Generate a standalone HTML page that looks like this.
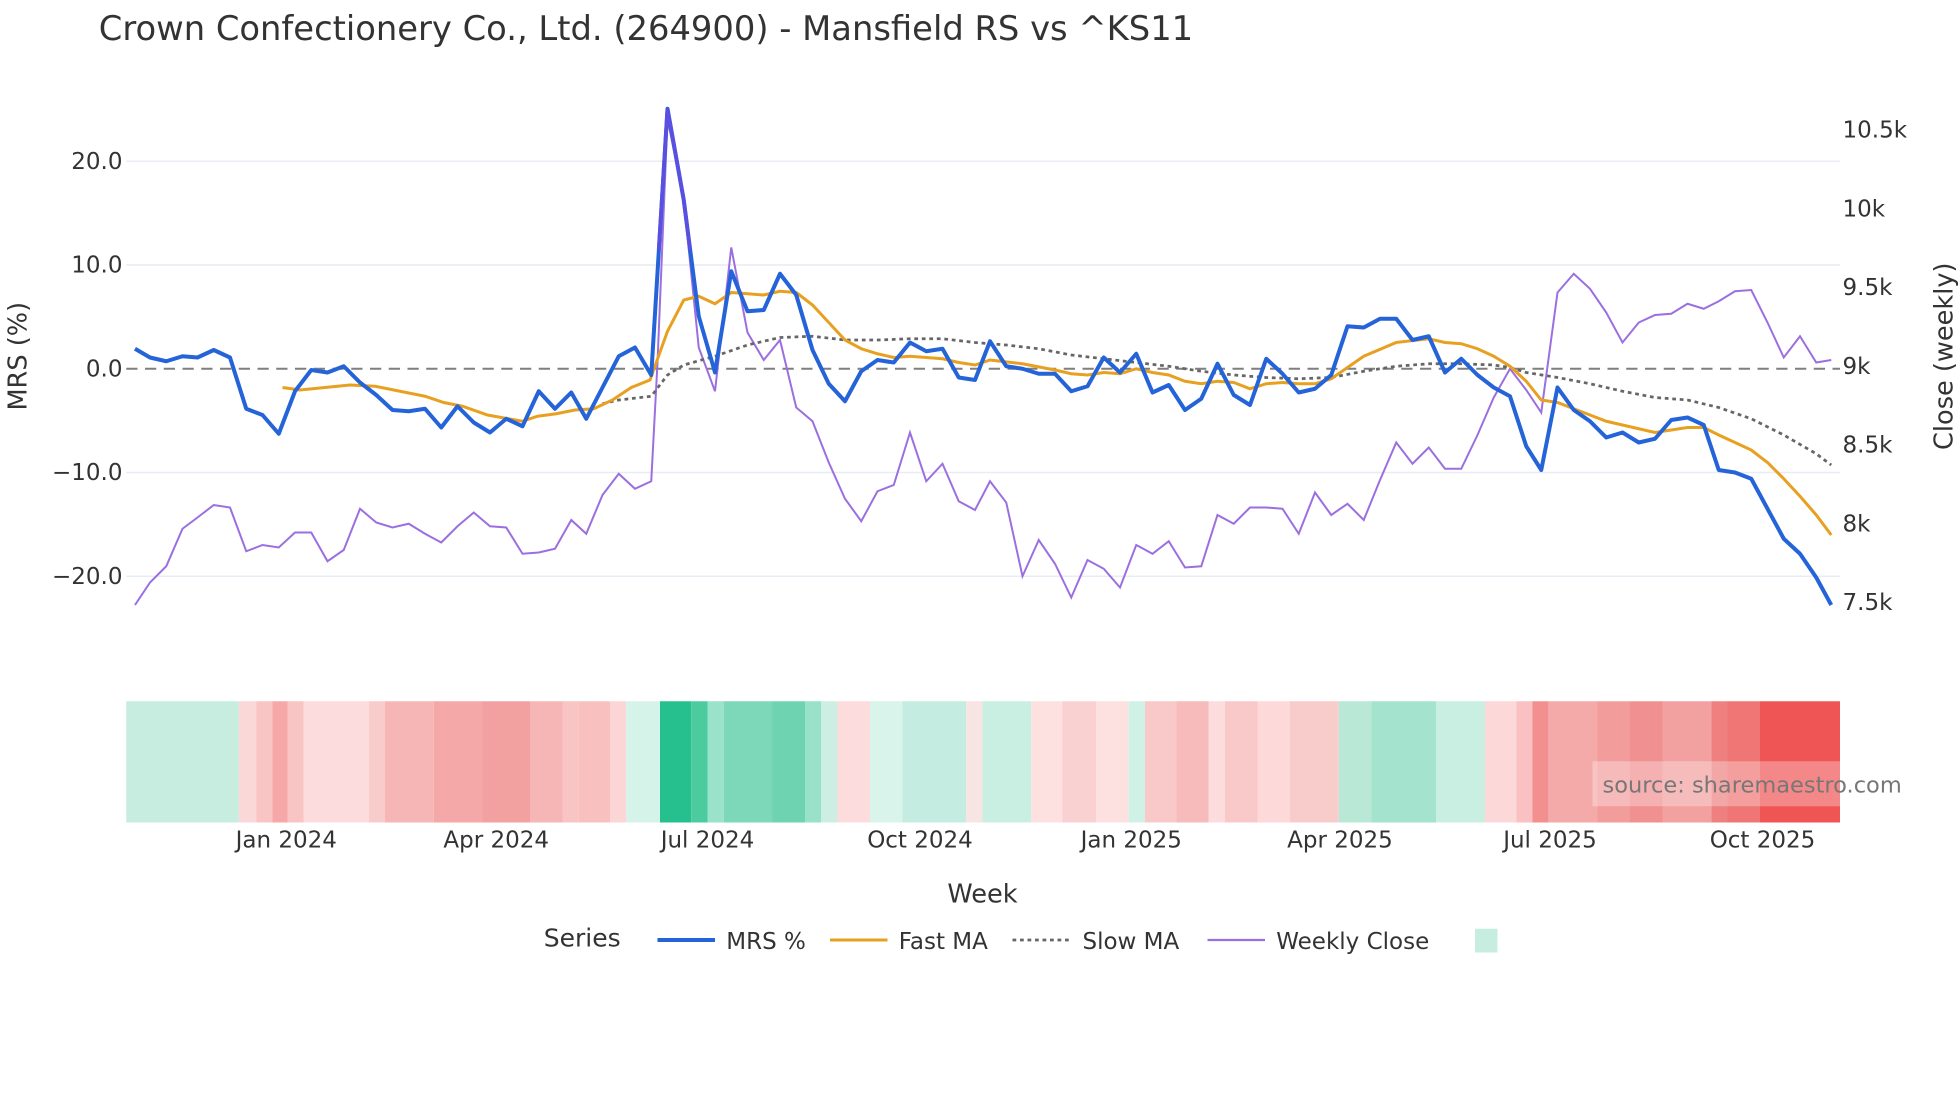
<!DOCTYPE html>
<html><head><meta charset="utf-8"><style>html,body{margin:0;padding:0;background:#fff}svg{display:block}</style></head>
<body>
<svg width="1960" height="1102" viewBox="0 0 1568 881.6" xmlns="http://www.w3.org/2000/svg" font-family="DejaVu Sans, Liberation Sans, sans-serif" fill="#2a3f5f">
<text x="79" y="32" font-size="27" fill="#333">Crown Confectionery Co., Ltd. (264900) - Mansfield RS vs ^KS11</text>
<g stroke="#e8ecf4" stroke-width="1.2">
<line x1="101" x2="1472" y1="129" y2="129"/><line x1="101" x2="1472" y1="212" y2="212"/><line x1="101" x2="1472" y1="378" y2="378"/><line x1="101" x2="1472" y1="461" y2="461"/>
</g>
<line x1="101" x2="1472" y1="295" y2="295" stroke="#7f7f7f" stroke-width="1.6" stroke-dasharray="9,6"/>
<g font-size="18.4" fill="#333" text-anchor="end">
<text x="98" y="135">20.0</text><text x="98" y="218">10.0</text><text x="98" y="301">0.0</text><text x="98" y="384">−10.0</text><text x="98" y="467">−20.0</text>
</g>
<g font-size="18.4" fill="#333">
<text x="1474" y="110">10.5k</text><text x="1474" y="173">10k</text><text x="1474" y="236">9.5k</text><text x="1474" y="299">9k</text><text x="1474" y="362">8.5k</text><text x="1474" y="425">8k</text><text x="1474" y="488">7.5k</text>
</g>
<text transform="translate(21,285) rotate(-90)" font-size="20.5" fill="#333" text-anchor="middle">MRS (%)</text>
<text transform="translate(1562,285) rotate(-90)" font-size="20.5" fill="#333" text-anchor="middle">Close (weekly)</text>

<polyline fill="none" stroke="#9b6fe0" stroke-width="1.6" points="108,484 120,466 133,453 146,423 158,414 171,404 184,406 197,441 210,436 223,438 236,426 249,426 262,449 275,440 288,407 301,418 314,422 327,419 340,427 353,434 366,421 379,410 392,421 405,422 418,443 431,442 444,439 457,416 469,427 482,396 495,379 508,391 521,385 526,290 534,95 547,160 559,278 572,313 585,198 598,266 611,288 624,272 637,326 650,337 663,370 676,399 689,417 702,393 715,388 728,346 741,385 754,371 767,401 780,408 792,385 805,402 818,461 831,432 844,451 857,478 870,448 883,455 896,470 909,436 922,443 935,433 948,454 961,453 974,412 987,419 1000,406 1013,406 1026,407 1039,427 1052,394 1065,412 1078,403 1091,416 1104,384 1117,354 1130,371 1143,358 1156,375 1169,375 1182,348 1195,318 1208,295 1221,312 1233,330 1246,234 1259,219 1272,231 1285,250 1298,274 1311,258 1324,252 1337,251 1350,243 1363,247 1375,241 1388,233 1401,232 1414,258 1427,286 1440,269 1453,290 1465,288"/>
<polyline fill="none" stroke="#666" stroke-width="2.2" stroke-dasharray="3,3" points="482,323 495,320 521,317 534,300 547,292 572,285 598,276 624,270 650,269 676,272 702,272 728,271 754,271 780,274 805,276 831,279 857,284 883,287 909,290 935,293 961,297 987,300 1013,302 1039,303 1065,302 1091,297 1117,293 1143,291 1169,291 1195,292 1208,294 1221,298 1246,302 1272,307 1298,313 1324,318 1350,320 1375,326 1401,335 1427,348 1453,363 1465,372"/>
<polyline fill="none" stroke="#e8a020" stroke-width="2.4" points="226,310 240,312 260,310 280,308 300,309 320,313 340,317 355,322 370,325 390,332 418,337 430,333 445,331 460,328 475,327 490,320 505,310 520,304 534,265 547,240 559,237 572,243 585,234 598,235 611,236 624,233 637,234 650,244 663,258 676,272 689,279 702,283 715,286 728,285 754,287 767,290 780,292 792,288 818,291 844,296 857,299 870,300 883,298 896,299 909,295 922,298 935,300 948,305 961,307 974,305 987,306 1000,311 1013,307 1026,306 1039,307 1052,307 1065,303 1078,294 1091,285 1117,274 1143,271 1156,274 1169,275 1182,279 1195,285 1208,293 1221,305 1233,320 1246,322 1259,327 1272,332 1285,337 1298,340 1311,343 1324,346 1337,344 1350,342 1363,342 1375,348 1388,354 1401,360 1414,370 1427,383 1440,397 1453,412 1465,428"/>
<polyline fill="none" stroke="#2563d8" stroke-width="3.2" stroke-linejoin="round" points="108,279 120,286 133,289 146,285 158,286 171,280 184,286 197,327 210,332 223,347 236,313 249,296 262,298 275,293 288,306 301,316 314,328 327,329 340,327 353,342 366,325 379,338 392,346 405,335 418,341 431,313 444,327 457,314 469,335 482,310 495,285 508,278 521,300 534,87 547,160 559,253 572,298 585,217 598,249 611,248 624,219 637,236 650,280 663,307 676,321 689,297 702,288 715,290 728,274 741,281 754,279 767,302 780,304 792,273 805,293 818,295 831,299 844,299 857,313 870,309 883,286 896,298 909,283 922,314 935,308 948,328 961,319 974,291 987,316 1000,324 1013,287 1026,299 1039,314 1052,311 1065,300 1078,261 1091,262 1104,255 1117,255 1130,272 1143,269 1156,298 1169,287 1182,300 1195,310 1208,317 1221,357 1233,376 1246,310 1259,328 1272,337 1285,350 1298,346 1311,354 1324,351 1337,336 1350,334 1363,340 1375,376 1388,378 1401,383 1414,407 1427,431 1440,443 1453,462 1465,484"/>
<polyline fill="none" stroke="#5a4fe0" stroke-width="3" points="527,200 534,87 547,160 552,200"/>

<g transform="translate(0,561)">
<rect x="101" width="90" height="97" fill="#c6ede0"/>
<rect x="191" width="14" height="97" fill="#fbd8d8"/><rect x="205" width="13" height="97" fill="#f9c4c4"/><rect x="218" width="12" height="97" fill="#f6a8a8"/><rect x="230" width="13" height="97" fill="#f9c4c4"/><rect x="243" width="52" height="97" fill="#fcdcdc"/><rect x="295" width="13" height="97" fill="#f9cccc"/><rect x="308" width="39" height="97" fill="#f7b6b6"/><rect x="347" width="39" height="97" fill="#f5a8a8"/><rect x="386" width="38" height="97" fill="#f3a0a0"/><rect x="424" width="26" height="97" fill="#f7b6b6"/><rect x="450" width="13" height="97" fill="#f9c4c4"/><rect x="463" width="25" height="97" fill="#f9c0c0"/><rect x="488" width="13" height="97" fill="#fcd6d6"/><rect x="501" width="27" height="97" fill="#d6f3ea"/><rect x="528" width="25" height="97" fill="#26c08e"/><rect x="553" width="13" height="97" fill="#4ccb9e"/><rect x="566" width="13" height="97" fill="#9be2ca"/><rect x="579" width="39" height="97" fill="#7dd8b9"/><rect x="618" width="26" height="97" fill="#6dd3b0"/><rect x="644" width="13" height="97" fill="#99e1c9"/><rect x="657" width="13" height="97" fill="#cdeee2"/><rect x="670" width="26" height="97" fill="#fcdcdc"/><rect x="696" width="26" height="97" fill="#d8f4eb"/><rect x="722" width="51" height="97" fill="#c4ece0"/><rect x="773" width="13" height="97" fill="#f9e4e4"/><rect x="786" width="39" height="97" fill="#c9efe2"/><rect x="825" width="25" height="97" fill="#fde0e0"/><rect x="850" width="27" height="97" fill="#fad1d1"/><rect x="877" width="26" height="97" fill="#fde0e0"/><rect x="903" width="13" height="97" fill="#d0f1e6"/><rect x="916" width="25" height="97" fill="#f9c8c8"/><rect x="941" width="26" height="97" fill="#f7bbbb"/><rect x="967" width="13" height="97" fill="#fcdcdc"/><rect x="980" width="26" height="97" fill="#f9c8c8"/><rect x="1006" width="26" height="97" fill="#fdd9d9"/><rect x="1032" width="39" height="97" fill="#f9cccc"/><rect x="1071" width="26" height="97" fill="#b9e8d7"/><rect x="1097" width="52" height="97" fill="#a4e3cd"/><rect x="1149" width="39" height="97" fill="#c9efe2"/><rect x="1188" width="25" height="97" fill="#fdd8d8"/><rect x="1213" width="13" height="97" fill="#f9c1c1"/><rect x="1226" width="13" height="97" fill="#f28f8f"/><rect x="1239" width="39" height="97" fill="#f5aaaa"/><rect x="1278" width="26" height="97" fill="#f39c9c"/><rect x="1304" width="26" height="97" fill="#f19090"/><rect x="1330" width="39" height="97" fill="#f3a0a0"/><rect x="1369" width="13" height="97" fill="#ee8080"/><rect x="1382" width="26" height="97" fill="#f07575"/><rect x="1408" width="64" height="97" fill="#ef5555"/>
<rect x="1274" y="48" width="198" height="36" fill="#fff" fill-opacity="0.3"/>
<text x="1282" y="73" font-size="18" fill="#777">source: sharemaestro.com</text>
</g>

<g font-size="18.4" fill="#333" text-anchor="middle">
<text x="229" y="678">Jan 2024</text><text x="397" y="678">Apr 2024</text><text x="566" y="678">Jul 2024</text><text x="736" y="678">Oct 2024</text><text x="905" y="678">Jan 2025</text><text x="1072" y="678">Apr 2025</text><text x="1240" y="678">Jul 2025</text><text x="1410" y="678">Oct 2025</text>
</g>
<text x="786" y="722" font-size="20.5" fill="#333" text-anchor="middle">Week</text>
<g font-size="18.4" fill="#333">
<text x="435" y="757" font-size="20">Series</text>
<line x1="526" x2="572" y1="752" y2="752" stroke="#2563d8" stroke-width="3.2"/><text x="581" y="759">MRS %</text>
<line x1="664" x2="710" y1="752" y2="752" stroke="#e8a020" stroke-width="2.4"/><text x="719" y="759">Fast MA</text>
<line x1="810" x2="855" y1="752" y2="752" stroke="#666" stroke-width="2.2" stroke-dasharray="3,3"/><text x="866" y="759">Slow MA</text>
<line x1="966" x2="1012" y1="752" y2="752" stroke="#9b6fe0" stroke-width="1.8"/><text x="1021" y="759">Weekly Close</text>
<rect x="1180" y="743" width="18" height="19" fill="#c6ede0"/>
</g>
</svg>
</body></html>
